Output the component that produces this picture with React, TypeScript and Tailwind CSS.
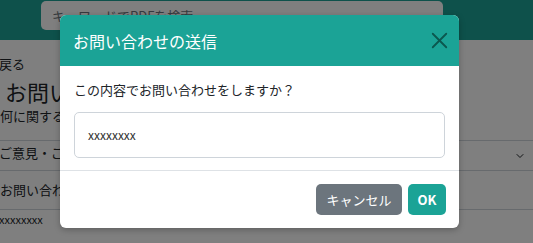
import { X, ChevronDown } from 'lucide-react';

const FONT = "font-['Noto_Sans_CJK_JP','Noto_Sans',sans-serif]";

const Background = () => (
  <div className="w-[533px] h-[243px] overflow-hidden bg-white">
    <div className="h-[40px] bg-[#1ca396] pl-[41px] pt-px">
      <div className="w-[402px] h-[29px] rounded-[5px] bg-white flex items-center pl-[11px] text-[13px] text-[#6c757d]">
        キーワードでPDFを検索
      </div>
    </div>
    <div className="pt-[14px] text-[#212529]">
      <div className="text-[13px] leading-[20px] -ml-[1px]">戻る</div>
      <div className="text-[22px] leading-[30px] mt-[2px] pl-[5px]">お問い合わせ</div>
      <div className="text-[13px] leading-[20px]">何に関するお問い合わせですか</div>
      <div className="mt-[14px] h-[31px] border-y border-[#ced4da] flex items-start pt-[2px] justify-between pr-[7px] text-[13px]">
        <span className="-ml-[1px]">ご意見・ご要望</span>
        <ChevronDown className="w-[12px] h-[12px] mt-[7px]" strokeWidth={2} />
      </div>
      <div className="h-[39px] border-b border-[#ced4da] flex items-center text-[13px]">お問い合わせ内容</div>
      <div className="h-[18px] flex items-center text-[11px] -ml-[1px]">xxxxxxxx</div>
    </div>
  </div>
);

export default function App() {
  return (
    <div className={`relative w-[533px] h-[243px] overflow-hidden ${FONT}`}>
      <Background />
      <div className="absolute inset-0 bg-black/50" />
      <div className="absolute left-[60px] top-[15px] w-[399px] bg-white rounded-[6px] overflow-hidden shadow-[0_2px_6px_rgba(0,0,0,0.25)]">
        <div className="h-[51px] bg-[#1ba396] flex items-center justify-between pl-[13px] pr-[6px]">
          <h2 className="text-[16px] text-white font-normal">お問い合わせの送信</h2>
          <X className="w-[27px] h-[27px] text-[#0c574f]" strokeWidth={1.6} />
        </div>
        <div className="px-[14px] pt-[14px] pb-[12px] border-b border-[#dee2e6]">
          <p className="text-[13px] leading-[20px] text-[#212529]">この内容でお問い合わせをしますか？</p>
          <div className="mt-[12px] h-[46px] border border-[#ced4da] rounded-[5px] flex items-center pl-[13px] text-[12px] text-[#333]">
            xxxxxxxx
          </div>
        </div>
        <div className="h-[57px] flex items-center justify-end gap-[6px] pr-[13px]">
          <button className="h-[31px] w-[86px] rounded-[5px] bg-[#6c757d] text-white text-[13px]">キャンセル</button>
          <button className="h-[31px] w-[38px] rounded-[5px] bg-[#1ba396] text-white text-[13px] font-bold">OK</button>
        </div>
      </div>
    </div>
  );
}
